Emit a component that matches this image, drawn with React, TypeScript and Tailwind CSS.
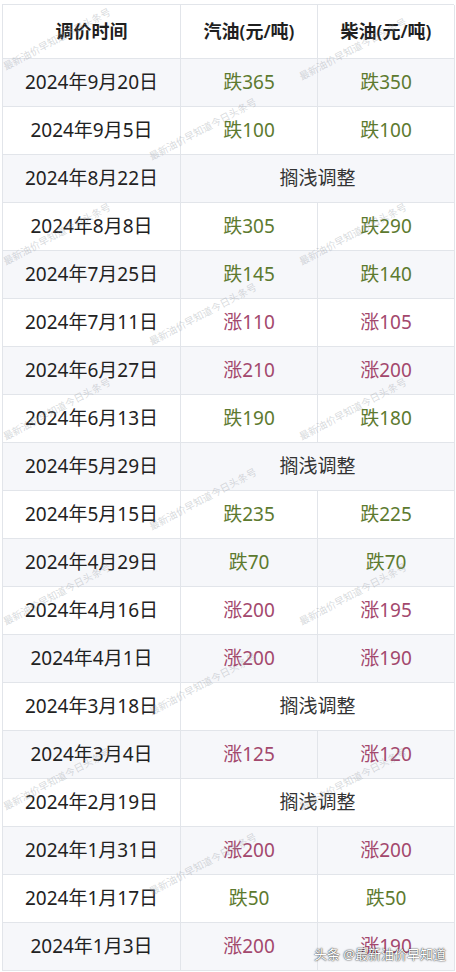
import React from 'react';

type Row = { date: string; gas?: string; diesel?: string; hold?: boolean };

const rows: Row[] = [
  { date: '2024年9月20日', gas: '跌365', diesel: '跌350' },
  { date: '2024年9月5日', gas: '跌100', diesel: '跌100' },
  { date: '2024年8月22日', hold: true },
  { date: '2024年8月8日', gas: '跌305', diesel: '跌290' },
  { date: '2024年7月25日', gas: '跌145', diesel: '跌140' },
  { date: '2024年7月11日', gas: '涨110', diesel: '涨105' },
  { date: '2024年6月27日', gas: '涨210', diesel: '涨200' },
  { date: '2024年6月13日', gas: '跌190', diesel: '跌180' },
  { date: '2024年5月29日', hold: true },
  { date: '2024年5月15日', gas: '跌235', diesel: '跌225' },
  { date: '2024年4月29日', gas: '跌70', diesel: '跌70' },
  { date: '2024年4月16日', gas: '涨200', diesel: '涨195' },
  { date: '2024年4月1日', gas: '涨200', diesel: '涨190' },
  { date: '2024年3月18日', hold: true },
  { date: '2024年3月4日', gas: '涨125', diesel: '涨120' },
  { date: '2024年2月19日', hold: true },
  { date: '2024年1月31日', gas: '涨200', diesel: '涨200' },
  { date: '2024年1月17日', gas: '跌50', diesel: '跌50' },
  { date: '2024年1月3日', gas: '涨200', diesel: '涨190' },
];

// faint diagonal watermarks: [left, top]
const marks: [number, number][] = [
  [4, 60], [300, 70], [150, 150], [4, 255], [300, 255],
  [150, 335], [4, 430], [300, 430], [150, 520], [4, 615],
  [300, 615], [150, 705], [4, 800], [300, 800], [150, 885],
];

function Amount({ value }: { value: string }) {
  const up = value.startsWith('涨');
  return <span className={up ? 'text-[#a3486d]' : 'text-[#5d7a2f]'}>{value}</span>;
}

export default function App() {
  return (
    <div
      className="relative h-[972px] w-[456px] overflow-hidden bg-white pt-[4px] pl-[2px]"
      style={{ fontFamily: '"Noto Sans", "Noto Sans CJK SC", sans-serif' }}
    >
      <div className="w-[452px] border-t border-l border-[#e2e5ea]">
        <div className="grid h-[54px] grid-cols-[178px_137px_137px] text-[18px] font-semibold text-[#1f1f1f]">
          <div className="flex items-center justify-center border-r border-b border-[#e2e5ea]">调价时间</div>
          <div className="flex items-center justify-center border-r border-b border-[#e2e5ea]">汽油(元/吨)</div>
          <div className="flex items-center justify-center border-r border-b border-[#e2e5ea]">柴油(元/吨)</div>
        </div>
        {rows.map((r, i) => (
          <div
            key={r.date}
            className={`grid h-[48px] grid-cols-[178px_137px_137px] text-[19px] text-[#222] ${
              i % 2 === 0 ? 'bg-[#f6f7fa]' : 'bg-white'
            }`}
          >
            <div className="flex items-center justify-center border-r border-b border-[#e2e5ea]">{r.date}</div>
            {r.hold ? (
              <div className="col-span-2 flex items-center justify-center border-r border-b border-[#e2e5ea] text-[#333]">
                搁浅调整
              </div>
            ) : (
              <>
                <div className="flex items-center justify-center border-r border-b border-[#e2e5ea]">
                  <Amount value={r.gas!} />
                </div>
                <div className="flex items-center justify-center border-r border-b border-[#e2e5ea]">
                  <Amount value={r.diesel!} />
                </div>
              </>
            )}
          </div>
        ))}
      </div>

      {marks.map(([x, y], i) => (
        <span
          key={i}
          className="pointer-events-none absolute origin-left -rotate-[28deg] whitespace-nowrap text-[10px] text-[#9aa0a8]/40"
          style={{ left: x, top: y }}
        >
          最新油价早知道今日头条号
        </span>
      ))}

      <div
        className="absolute right-[10px] bottom-[8px] text-[13px] text-white"
        style={{ textShadow: '0 0 2px rgba(0,0,0,0.7), 0 0 1px rgba(0,0,0,0.8)' }}
      >
        头条 @最新油价早知道
      </div>
    </div>
  );
}
